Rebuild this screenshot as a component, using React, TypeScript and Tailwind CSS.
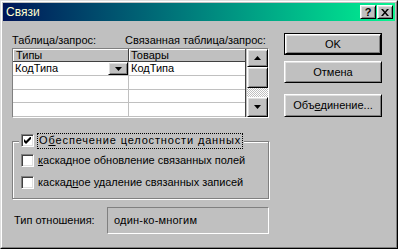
import React from 'react';

// classic 3D edges
const raised =
  'border border-t-white border-l-white border-r-black border-b-black shadow-[inset_1px_1px_0_#dfdfdf,inset_-1px_-1px_0_#808080]';
const sunken =
  'border border-t-[#808080] border-l-[#808080] border-r-white border-b-white shadow-[inset_1px_1px_0_#404040,inset_-1px_-1px_0_#dfdfdf]';

function Arrow({ down }: { down?: boolean }) {
  return (
    <svg width="7" height="4" viewBox="0 0 7 4" className="block">
      {down ? <path d="M0 0h7L3.5 4z" fill="black" /> : <path d="M0 4h7L3.5 0z" fill="black" />}
    </svg>
  );
}

function TitleButton({ children }: { children: React.ReactNode }) {
  return (
    <div className={`w-[16px] h-[14px] bg-[#c0c0c0] flex items-center justify-center ${raised}`}>
      {children}
    </div>
  );
}

function CheckBox({ checked }: { checked?: boolean }) {
  return (
    <div className={`w-[13px] h-[13px] bg-white shrink-0 flex items-center justify-center ${sunken}`}>
      {checked && (
        <svg width="7" height="7" viewBox="0 0 7 7" className="block">
          <path d="M0 2v3l2 2 5-5v-3l-5 5z" fill="black" />
        </svg>
      )}
    </div>
  );
}

function Button({ children, isDefault, className = '' }: { children: React.ReactNode; isDefault?: boolean; className?: string }) {
  if (isDefault) {
    return (
      <div className={`border border-black ${className}`}>
        <div className={`h-full bg-[#c0c0c0] flex items-center justify-center ${raised}`}>{children}</div>
      </div>
    );
  }
  return <div className={`bg-[#c0c0c0] flex items-center justify-center ${raised} ${className}`}>{children}</div>;
}

export default function App() {
  const rows = [0, 1, 2];

  return (
    <div className="w-[398px] h-[249px] bg-[#c0c0c0] font-['Liberation_Sans',Arial,sans-serif] text-[11px] leading-[13px] text-black border border-t-[#dfdfdf] border-l-[#dfdfdf] border-r-black border-b-black select-none">
      <div className="h-full border border-t-white border-l-white border-r-[#808080] border-b-[#808080] p-px flex flex-col">
        {/* title bar */}
        <div className="h-[18px] shrink-0 flex items-center pl-[3px] pr-[2px] bg-linear-to-r from-[#001458] to-[#10f490]">
          <span className="flex-1 text-[#ffffd0] text-[12px]">Связи</span>
          <TitleButton>
            <span className="font-bold text-[11px] leading-none">?</span>
          </TitleButton>
          <div className="w-px" />
          <TitleButton>
            <svg width="8" height="7" viewBox="0 0 8 7" className="block">
              <path d="M0 0h2l2 2.5L6 0h2L5 3.5 8 7H6L4 4.5 2 7H0l3-3.5z" fill="black" />
            </svg>
          </TitleButton>
        </div>

        <div className="flex flex-1 pl-[9px]">
          {/* left column */}
          <div className="w-[257px] flex flex-col">
            <div className="mt-[13px] h-[13px] flex">
              <span className="w-[113px]">Таблица/запрос:</span>
              <span>Связанная таблица/запрос:</span>
            </div>

            {/* relations grid */}
            <div className={`mt-px h-[70px] flex ${sunken}`}>
              <div className="w-[116px] flex flex-col bg-white border-r border-[#c0c0c0]">
                <div className="h-[13px] bg-[#c0c0c0] pl-[3px] border-r border-b border-[#404040] -mr-px shadow-[inset_1px_1px_0_white]">Типы</div>
                <div className="h-[14px] border-b border-[#c0c0c0] flex items-center pl-[2px]">
                  <span className="flex-1">КодТипа</span>
                  <div className={`w-[20px] h-[13px] bg-[#c0c0c0] flex items-center justify-center ${raised}`}>
                    <Arrow down />
                  </div>
                </div>
                {rows.map((r) => (
                  <div key={r} className="h-[14px] border-b border-[#c0c0c0]" />
                ))}
              </div>
              <div className="w-[117px] flex flex-col bg-white border-r border-[#404040]">
                <div className="h-[13px] bg-[#c0c0c0] pl-[2px] border-b border-[#404040] shadow-[inset_1px_1px_0_white]">Товары</div>
                <div className="h-[14px] border-b border-[#c0c0c0] pl-[2px] flex items-center">КодТипа</div>
                {rows.map((r) => (
                  <div key={r} className="h-[14px] border-b border-[#c0c0c0]" />
                ))}
              </div>
              {/* scrollbar */}
              <div className="flex-1 flex flex-col pl-px bg-[#c0c0c0]">
                <div className={`h-[18px] flex items-center justify-center ${raised}`}>
                  <Arrow />
                </div>
                <div className={`h-[21px] ${raised}`} />
                <div className="h-[9px] bg-[repeating-conic-gradient(#c0c0c0_0%_25%,#ffffff_0%_50%)] bg-size-[2px_2px]" />
                <div className={`flex-1 flex items-center justify-center ${raised}`}>
                  <Arrow down />
                </div>
              </div>
            </div>

            {/* integrity group */}
            <div className="relative mt-[23px] border border-[#808080] shadow-[inset_1px_1px_0_white,1px_1px_0_white] pl-[8px] pt-[12px] pb-[9px] flex flex-col gap-[9px]">
              <div className="absolute left-[6px] top-[-10px] h-[17px] pl-[2px] pr-px bg-[#c0c0c0] flex items-center">
                <CheckBox checked />
                <span className="ml-[3px] h-[16px] px-px border border-dotted border-black flex items-center tracking-[0.85px]">
                  О<span className="underline underline-offset-1">б</span>еспечение целостности данных
                </span>
              </div>
              <div className="h-[13px] flex items-center">
                <CheckBox />
                <span className="ml-[4px]">
                  <span className="underline underline-offset-1">к</span>аскадное обновление связанных полей
                </span>
              </div>
              <div className="h-[13px] flex items-center">
                <CheckBox />
                <span className="ml-[4px]">
                  каскад<span className="underline underline-offset-1">н</span>ое удаление связанных записей
                </span>
              </div>
            </div>

            {/* relation type */}
            <div className="mt-[8px] flex items-center">
              <span className="w-[95px] pl-[2px]">Тип отношения:</span>
              <div className="w-[162px] h-[27px] pl-[6px] flex items-center tracking-[0.2px] border border-t-[#808080] border-l-[#808080] border-r-white border-b-white">
                один-ко-многим
              </div>
            </div>
          </div>

          {/* right column */}
          <div className="ml-[15px] w-[98px] flex flex-col">
            <Button isDefault className="mt-[12px] h-[22px]">OK</Button>
            <Button className="mt-[6px] h-[22px]">Отмена</Button>
            <Button className="mt-[11px] h-[23px]">
              <span>
                Объ<span className="underline underline-offset-1">е</span>динение...
              </span>
            </Button>
          </div>
        </div>
      </div>
    </div>
  );
}
